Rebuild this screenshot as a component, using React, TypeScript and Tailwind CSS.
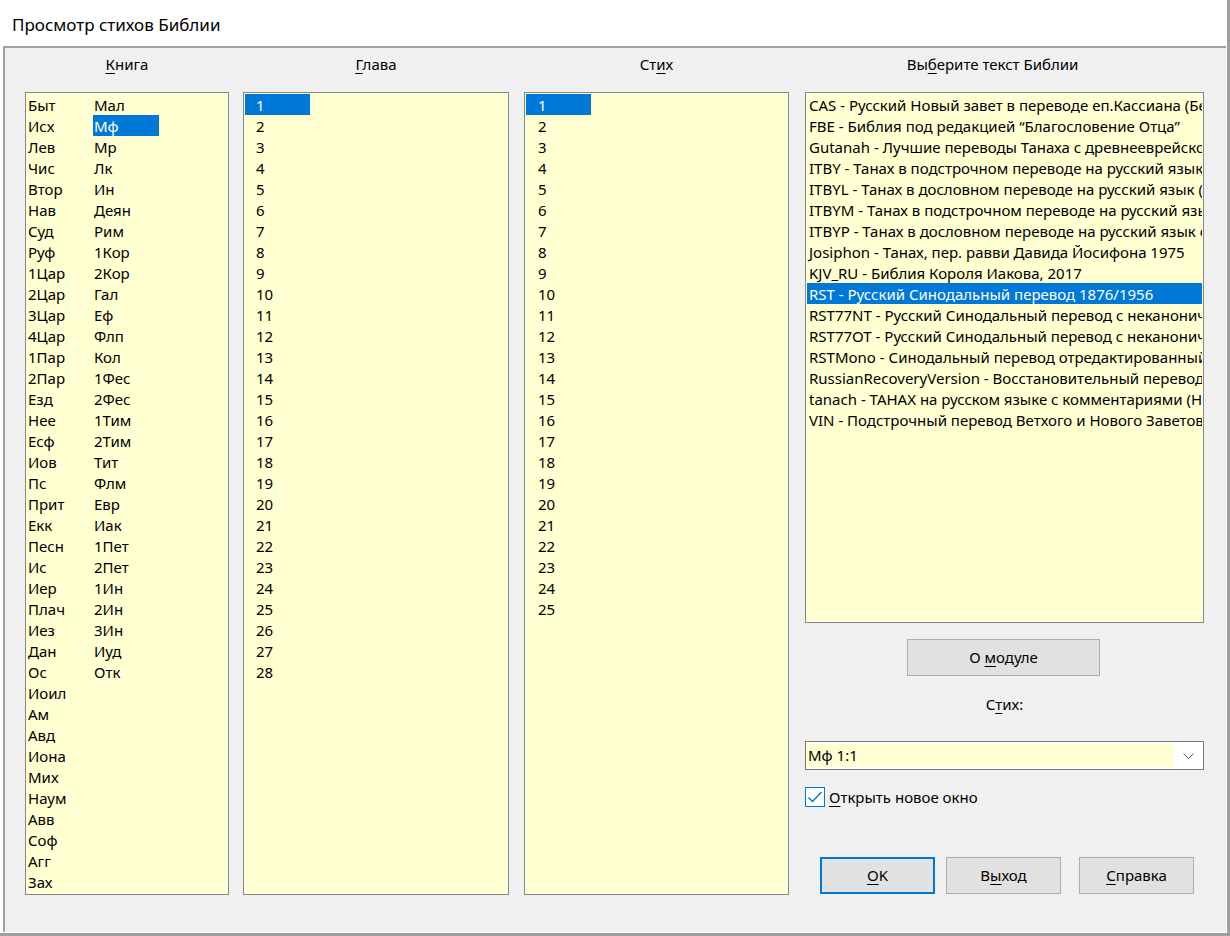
import React from "react";

const BOOKS_LEFT = [
  "Быт", "Исх", "Лев", "Чис", "Втор", "Нав", "Суд", "Руф", "1Цар", "2Цар",
  "3Цар", "4Цар", "1Пар", "2Пар", "Езд", "Нее", "Есф", "Иов", "Пс", "Прит",
  "Екк", "Песн", "Ис", "Иер", "Плач", "Иез", "Дан", "Ос", "Иоил", "Ам",
  "Авд", "Иона", "Мих", "Наум", "Авв", "Соф", "Агг", "Зах",
];

const BOOKS_RIGHT = [
  "Мал", "Мф", "Мр", "Лк", "Ин", "Деян", "Рим", "1Кор", "2Кор", "Гал",
  "Еф", "Флп", "Кол", "1Фес", "2Фес", "1Тим", "2Тим", "Тит", "Флм", "Евр",
  "Иак", "1Пет", "2Пет", "1Ин", "2Ин", "3Ин", "Иуд", "Отк",
];

const MODULES = [
  "CAS - Русский Новый завет в переводе еп.Кассиана (Бе",
  "FBE - Библия под редакцией “Благословение Отца”",
  "Gutanah - Лучшие переводы Танаха с древнееврейског",
  "ITBY - Танах в подстрочном переводе на русский язык",
  "ITBYL - Танах в дословном переводе на русский язык (Е",
  "ITBYM - Танах в подстрочном переводе на русский язы",
  "ITBYP - Танах в дословном переводе на русский язык с",
  "Josiphon - Танах, пер. равви Давида Йосифона 1975",
  "KJV_RU - Библия Короля Иакова, 2017",
  "RST - Русский Синодальный перевод 1876/1956",
  "RST77NT - Русский Синодальный перевод с неканонич",
  "RST77OT - Русский Синодальный перевод с неканонич",
  "RSTMono - Синодальный перевод отредактированный",
  "RussianRecoveryVersion - Восстановительный перевод",
  "tanach - ТАНАХ на русском языке с комментариями (На",
  "VIN - Подстрочный перевод Ветхого и Нового Заветов",
];

const chapters = Array.from({ length: 28 }, (_, i) => i + 1);
const verses = Array.from({ length: 25 }, (_, i) => i + 1);

function U({ children }: { children: React.ReactNode }) {
  return <span className="underline decoration-1 underline-offset-[3px]">{children}</span>;
}

function Header({ children, className }: { children: React.ReactNode; className?: string }) {
  return (
    <div className={"h-[44px] shrink-0 pt-[6px] leading-[21px] text-center " + (className ?? "")}>
      {children}
    </div>
  );
}

function NumberList({ items, pad }: { items: number[]; pad: string }) {
  return (
    <div className="h-[803px] border border-[#828790] bg-[#ffffd2] p-[1px] overflow-hidden">
      {items.map((n) => (
        <div
          key={n}
          className={
            "w-[65px] h-[21px] leading-[22px] " +
            pad +
            (n === 1 ? " bg-[#0078d7] text-white" : "")
          }
        >
          {n}
        </div>
      ))}
    </div>
  );
}

function Button({
  children,
  primary,
  className,
}: {
  children: React.ReactNode;
  primary?: boolean;
  className?: string;
}) {
  return (
    <div
      className={
        "h-[37px] flex items-center justify-center bg-[#e1e1e1] " +
        (primary ? "border-2 border-[#0078d7] " : "border border-[#adadad] ") +
        (className ?? "")
      }
    >
      {children}
    </div>
  );
}

export default function App() {
  return (
    <div className="w-[1230px] h-[936px] bg-white flex flex-col border-r-[3px] border-b-[3px] border-[#a0a0a0] font-['Noto_Sans',sans-serif] text-[15px] text-black overflow-hidden">
      {/* caption */}
      <div className="h-[46px] shrink-0 flex items-center pl-[12px] pt-[3px] text-[17px]">
        Просмотр стихов Библии
      </div>

      {/* dialog client area */}
      <div className="flex-1 ml-[3px] mr-[1px] mb-[1px] border-l-2 border-t-2 border-[#a0a0a0] bg-[#f0f0f0] flex items-start pl-[20px]">
        {/* books */}
        <div className="w-[204px] flex flex-col">
          <Header>
            <U>К</U>нига
          </Header>
          <div className="h-[803px] border border-[#828790] bg-[#ffffd2] p-[1px] flex overflow-hidden">
            <div className="w-[66px]">
              {BOOKS_LEFT.map((b) => (
                <div key={b} className="h-[21px] leading-[22px] pl-[1px]">
                  {b}
                </div>
              ))}
            </div>
            <div className="w-[66px]">
              {BOOKS_RIGHT.map((b) => (
                <div
                  key={b}
                  className={
                    "h-[21px] leading-[22px] pl-[1px]" +
                    (b === "Мф" ? " bg-[#0078d7] text-white" : "")
                  }
                >
                  {b}
                </div>
              ))}
            </div>
          </div>
        </div>

        {/* chapters */}
        <div className="w-[266px] ml-[14px] flex flex-col">
          <Header>
            <U>Г</U>лава
          </Header>
          <NumberList items={chapters} pad="pl-[11px]" />
        </div>

        {/* verses */}
        <div className="w-[265px] ml-[15px] flex flex-col">
          <Header>
            Ст<U>и</U>х
          </Header>
          <NumberList items={verses} pad="pl-[12px]" />
        </div>

        {/* modules + controls */}
        <div className="w-[399px] ml-[16px] flex flex-col">
          <Header className="pr-[24px]">
            Вы<U>б</U>ерите текст Библии
          </Header>
          <div className="h-[531px] border border-[#828790] bg-[#ffffd2] p-[1px] overflow-hidden">
            {MODULES.map((m) => (
              <div
                key={m}
                className={
                  "h-[21px] leading-[22px] pl-[2px] whitespace-nowrap overflow-hidden" +
                  (m.startsWith("RST - ") ? " bg-[#0078d7] text-white" : "")
                }
              >
                {m}
              </div>
            ))}
          </div>

          <Button className="w-[193px] mt-[16px] ml-[102px]">
            О&nbsp;<U>м</U>одуле
          </Button>

          <div className="mt-[18px] h-[21px] leading-[21px] text-center">
            С<U>т</U>их:
          </div>

          {/* verse combo box */}
          <div className="mt-[26px] h-[29px] border border-[#7a7a7a] bg-white flex">
            <div className="flex-1 my-[2px] bg-[#ffffd2] pl-[2px] leading-[23px]">Мф 1:1</div>
            <div className="w-[29px] flex items-center justify-center">
              <svg width="11" height="6" viewBox="0 0 11 6" fill="none">
                <path d="M0.5 0.5 L5.5 5.5 L10.5 0.5" stroke="#606060" strokeWidth="1" />
              </svg>
            </div>
          </div>

          <div className="mt-[17px] h-[20px] flex items-center">
            <div className="w-[20px] h-[20px] border border-[#0078d7] bg-white flex items-center justify-center">
              <svg width="18" height="18" viewBox="0 0 18 18" fill="none">
                <path d="M2.5 9.5 L6.5 13.5 L15.5 4" stroke="#0078d7" strokeWidth="1.5" />
              </svg>
            </div>
            <span className="ml-[4px] leading-[20px]">
              <U>О</U>ткрыть новое окно
            </span>
          </div>

          <div className="mt-[50px] flex">
            <Button primary className="w-[115px] ml-[15px]">
              <U>O</U>K
            </Button>
            <Button className="w-[115px] ml-[11px]">
              В<U>ы</U>ход
            </Button>
            <Button className="w-[115px] ml-[18px]">
              <U>С</U>правка
            </Button>
          </div>
        </div>
      </div>
    </div>
  );
}
